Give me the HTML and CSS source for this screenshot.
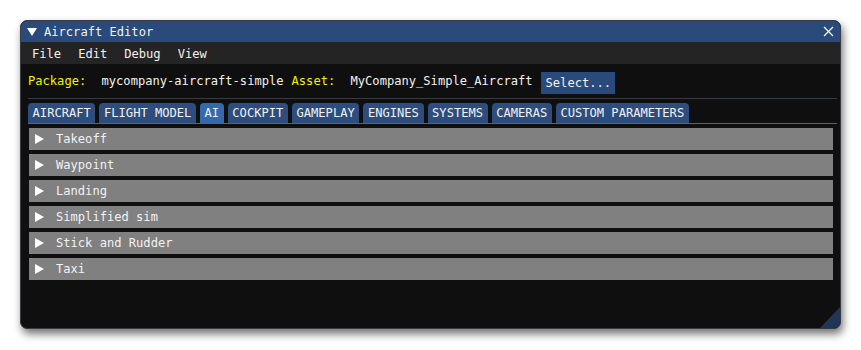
FILE: index.html
```html
<!DOCTYPE html>
<html lang="en">
<head>
  <meta charset="UTF-8" />
  <title>Aircraft Editor</title>
  <link rel="stylesheet" href="styles.css">
</head>
<body>

  <div class="window">
    <div class="titlebar">
      <svg class="collapse" width="10" height="8" viewBox="0 0 10 8"><polygon points="0,0 10,0 5,8" fill="#fff"/></svg>
      <span class="title">Aircraft Editor</span>
      <svg class="close" width="11" height="11" viewBox="0 0 11 11"><path d="M1 1 L10 10 M10 1 L1 10" stroke="#fff" stroke-width="1.2" fill="none"/></svg>
    </div>

    <div class="menubar">
      <span>File</span>
      <span>Edit</span>
      <span>Debug</span>
      <span>View</span>
    </div>

    <div class="content">
      <div class="asset-row">
        <span class="label">Package:&nbsp;</span>
        <span class="value">mycompany-aircraft-simple</span>
        <span class="label">Asset:&nbsp;</span>
        <span class="value">MyCompany_Simple_Aircraft</span>
        <button class="btn">Select...</button>
      </div>

      <div class="separator"></div>

      <div class="tabbar">
        <span class="tab">AIRCRAFT</span>
        <span class="tab">FLIGHT MODEL</span>
        <span class="tab active">AI</span>
        <span class="tab">COCKPIT</span>
        <span class="tab">GAMEPLAY</span>
        <span class="tab">ENGINES</span>
        <span class="tab">SYSTEMS</span>
        <span class="tab">CAMERAS</span>
        <span class="tab">CUSTOM PARAMETERS</span>
      </div>

      <ul class="headers">
        <li><svg class="arrow" width="9" height="10" viewBox="0 0 9 10"><polygon points="0,0 9,5 0,10" fill="#fff"/></svg>Takeoff</li>
        <li><svg class="arrow" width="9" height="10" viewBox="0 0 9 10"><polygon points="0,0 9,5 0,10" fill="#fff"/></svg>Waypoint</li>
        <li><svg class="arrow" width="9" height="10" viewBox="0 0 9 10"><polygon points="0,0 9,5 0,10" fill="#fff"/></svg>Landing</li>
        <li><svg class="arrow" width="9" height="10" viewBox="0 0 9 10"><polygon points="0,0 9,5 0,10" fill="#fff"/></svg>Simplified sim</li>
        <li><svg class="arrow" width="9" height="10" viewBox="0 0 9 10"><polygon points="0,0 9,5 0,10" fill="#fff"/></svg>Stick and Rudder</li>
        <li><svg class="arrow" width="9" height="10" viewBox="0 0 9 10"><polygon points="0,0 9,5 0,10" fill="#fff"/></svg>Taxi</li>
      </ul>
    </div>

    <div class="resize-grip"></div>
  </div>

</body>
</html>
```

FILE: styles.css
```css
:root {
  --title: #294a7a;
  --menu: #242424;
  --bg: #0f0f0f;
  --tab: #2c4d7e;
  --tab-active: #3369ad;
  --header: #808080;
  --text: #f2f2f2;
  --yellow: #f2f200;
}

* {
  box-sizing: border-box;
}

body {
  margin: 0;
  padding: 20px;
  background-color: #ffffff;
  font-family: "DejaVu Sans Mono", "Liberation Mono", monospace;
  font-size: 12.1px;
  line-height: 16px;
  color: var(--text);
}

.window {
  position: relative;
  width: 821px;
  height: 309px;
  background-color: var(--bg);
  border: 1px solid #3a3a44;
  border-radius: 7px;
  overflow: hidden;
  box-shadow: 2px 5px 9px rgba(0,0,0,0.55);
}

.titlebar {
  display: flex;
  align-items: center;
  height: 21px;
  padding: 0 6px;
  background-color: var(--title);
}

.collapse {
  margin-right: 7px;
}

.title {
  flex: 1;
}

.menubar {
  display: flex;
  align-items: center;
  gap: 17px;
  height: 22px;
  padding: 1px 0 0 11px;
  background-color: var(--menu);
}

.content {
  padding: 8px 3px 0 7px;
}

.asset-row {
  display: flex;
  align-items: flex-start;
  gap: 8px;
  height: 22px;
}

.label {
  padding-top: 1px;
  color: var(--yellow);
}

.value {
  padding-top: 1px;
}

.btn {
  font: inherit;
  color: var(--text);
  background-color: var(--title);
  border: none;
  padding: 3px 4px 3px 5px;
  height: 22px;
  line-height: 16px;
}

.separator {
  height: 1px;
  margin-top: 4px;
  background-color: #3a3a42;
}

.tabbar {
  display: flex;
  gap: 4px;
  margin-top: 4px;
  border-bottom: 1px solid var(--tab-active);
}

.tab {
  height: 20px;
  padding: 2px 4.6px;
  background-color: var(--tab);
  border-radius: 4px 4px 0 0;
}

.tab.active {
  background-color: var(--tab-active);
}

.headers {
  list-style: none;
  margin: 4px 4px 0 1px;
  padding: 0;
}

.headers li {
  display: flex;
  align-items: center;
  height: 22px;
  margin-bottom: 4px;
  padding-left: 6px;
  background-color: var(--header);
}

.arrow {
  margin-right: 12px;
}

.resize-grip {
  position: absolute;
  right: 0;
  bottom: 0;
  width: 20px;
  height: 21px;
  background-color: #1f3656;
  clip-path: polygon(100% 0, 100% 100%, 0 100%);
}
```
